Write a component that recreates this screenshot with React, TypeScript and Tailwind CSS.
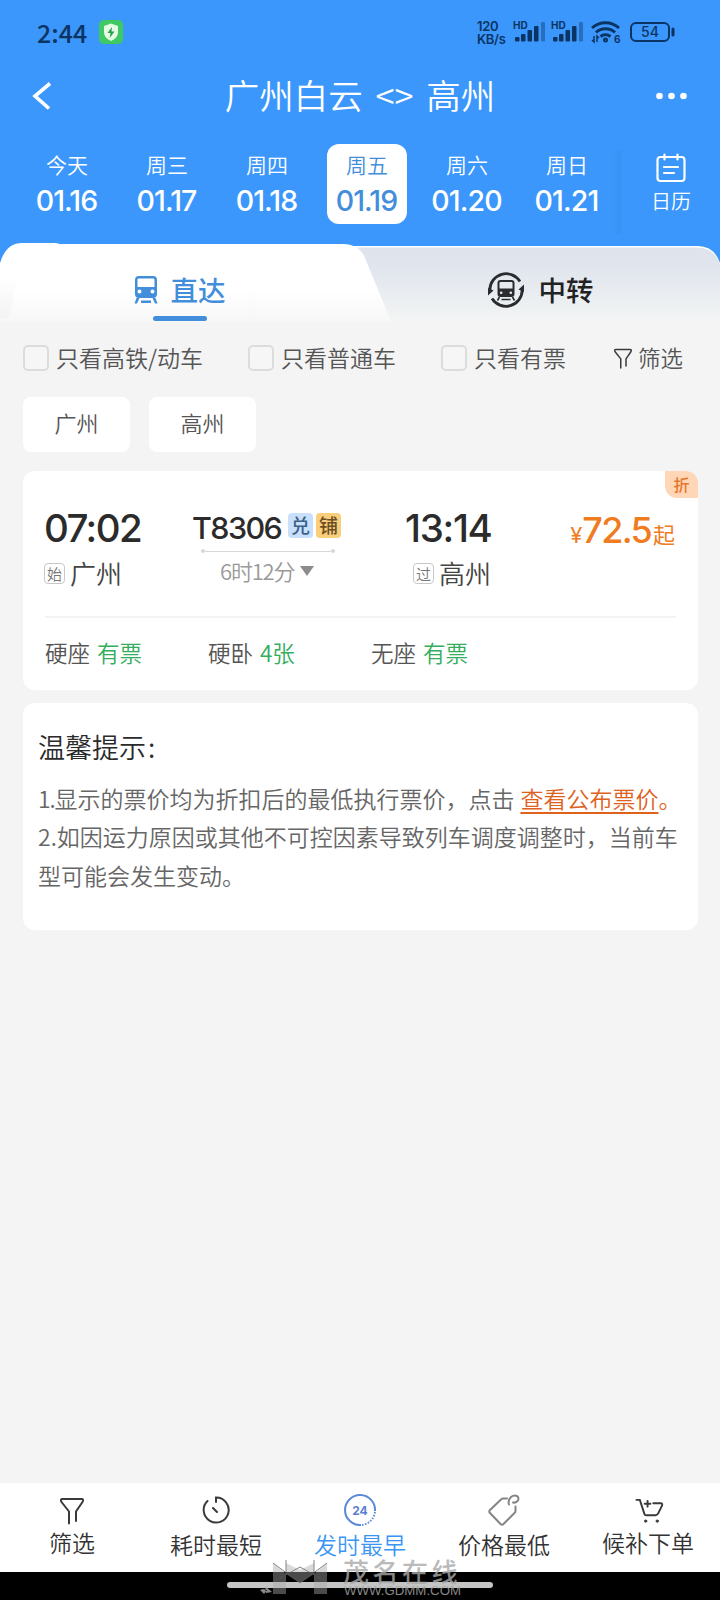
import type { ReactNode } from 'react';

const days = [
  { label: '今天', date: '01.16' },
  { label: '周三', date: '01.17' },
  { label: '周四', date: '01.18' },
  { label: '周五', date: '01.19', active: true },
  { label: '周六', date: '01.20' },
  { label: '周日', date: '01.21' },
];

const seats = [
  { name: '硬座', left: '有票' },
  { name: '硬卧', left: '4张' },
  { name: '无座', left: '有票' },
];

const digits = "font-['Inter','Noto_Sans_CJK_SC',sans-serif]";

const Signal = () => (
  <svg className="overflow-visible" width="32" height="22" viewBox="0 0 32 22" fill="#0b3463">
    <text x="0" y="8" fontSize="10" fontWeight="700" fontFamily="Inter, sans-serif">HD</text>
    <rect x="2" y="16" width="4.500" height="4.500" rx="1" />
    <rect x="8" y="13" width="4.500" height="7.500" rx="1" />
    <rect x="14.500" y="9" width="4.500" height="11.500" rx="1" />
    <rect x="21" y="5" width="4.500" height="15.500" rx="1" />
    <rect x="28" y="1" width="4" height="19.500" rx="1" opacity="0.4" />
  </svg>
);

const StatusBar = () => (
  <div className="flex h-16 items-center justify-between pl-[37px] pr-[44px] text-[#0b3463]">
    <div className="flex items-center gap-3">
      <span className="mb-px w-[50px] whitespace-nowrap text-[25px] leading-8 font-medium">2:44</span>
      <svg width="24" height="24" viewBox="0 0 24 24">
        <rect width="24" height="24" rx="5" fill="#3fc964" />
        <path d="M12 3.500 19 6v6c0 4.500-3 7.300-7 9-4-1.700-7-4.500-7-9V6Z" fill="#e4fbe4" />
        <path d="m13 7-4.500 6h3l-.8 5 4.800-6.500h-3Z" fill="#2a9e4c" />
      </svg>
    </div>
    <div className="flex items-center">
      <div className="mt-0.5 w-[36px] font-['Inter',sans-serif] text-[13px] leading-[13px] font-semibold tracking-[-0.3px]">
        <div>120</div>
        <div>KB/s</div>
      </div>
      <div className="flex gap-[6px]">
        <Signal />
        <Signal />
      </div>
      <svg className="ml-2" width="30" height="24" viewBox="0 0 30 24" fill="none" stroke="#0b3463" strokeWidth="3">
        <path d="M1 8a20 20 0 0 1 27 0M5 12.500a14 14 0 0 1 19 0M9.500 16.500a8 8 0 0 1 10 0" />
        <circle cx="14.500" cy="20" r="1.500" strokeWidth="2" />
        <path d="M3 16v6l-2-2M6 22v-6l2 2" strokeWidth="1.500" />
        <text x="23" y="23" fontSize="10" fontWeight="700" fill="#0b3463" stroke="none" fontFamily="Inter, sans-serif">6</text>
      </svg>
      <svg className="ml-[9px]" width="46" height="20" viewBox="0 0 46 20" fill="none" stroke="#0b3463">
        <rect x="1" y="1" width="38" height="18" rx="5" strokeWidth="2" />
        <path d="M43 7v6" strokeWidth="3" strokeLinecap="round" />
        <text x="20" y="15" textAnchor="middle" fontSize="14" fontWeight="500" fill="#0b3463" stroke="none" fontFamily="Inter, sans-serif">54</text>
      </svg>
    </div>
  </div>
);

const TrainIcon = () => (
  <svg width="24" height="28" viewBox="0 0 24 28" fill="#438edb">
    <path fillRule="evenodd" d="M5 0h14q4 0 4 4v14q0 4-4 4H5q-4 0-4-4V4q0-4 4-4Zm-1.500 3.500v7.500h17V3.500q0-1-1-1h-15q-1 0-1 1ZM5.500 13.500a2 2 0 1 0 0 4 2 2 0 0 0 0-4Zm13 0a2 2 0 1 0 0 4 2 2 0 0 0 0-4Z" />
    <path d="M2.500 22h3L3 27.500H.5ZM18.500 22h3l2 5.500H21ZM7 24.500h10V27H7Z" />
  </svg>
);

const TransferIcon = () => (
  <svg width="38" height="38" viewBox="0 0 38 38" fill="none" stroke="#2b2c30">
    <path d="M2.800 19A16.300 16.300 0 0 1 33 10.500M35.200 19A16.300 16.300 0 0 1 5 27.500" strokeWidth="2.800" />
    <path d="M1 17v7.500l5.500-5ZM37 21v-7.500l-5.500 5Z" fill="#2b2c30" stroke="none" />
    <path fillRule="evenodd" d="M13.500 9h11q3 0 3 3v11q0 3-3 3h-11q-3 0-3-3V12q0-3 3-3Zm-1 3v5.500h13V12q0-1-1-1h-11q-1 0-1 1Zm1.700 8.500a1.300 1.300 0 1 0 0 2.600 1.300 1.300 0 0 0 0-2.600Zm9.600 0a1.300 1.300 0 1 0 0 2.600 1.300 1.300 0 0 0 0-2.600Z" fill="#2b2c30" stroke="none" />
    <path d="m12.500 26-2 3.500M25.500 26l2 3.500M14.500 28.500h9" strokeWidth="1.600" />
  </svg>
);

const Tabs = () => (
  <div className="relative h-[79px]">
    {/* tab backgrounds */}
    <svg className="absolute inset-0" width="720" height="79" viewBox="0 0 720 79">
      <defs>
        <linearGradient id="rest" x1="0" y1="0" x2="0" y2="1">
          <stop offset="0" stopColor="#dfe4ec" />
          <stop offset="0.300" stopColor="#e1e6ee" />
          <stop offset="1" stopColor="#f2f4f4" />
        </linearGradient>
        <linearGradient id="current" x1="0" y1="0" x2="0" y2="1">
          <stop offset="0.600" stopColor="#fff" />
          <stop offset="1" stopColor="#f7f7f7" />
        </linearGradient>
        <linearGradient id="fade" x1="0" y1="0" x2="0" y2="1">
          <stop offset="0" stopColor="#f4f4f4" stopOpacity="0" />
          <stop offset="1" stopColor="#f4f4f4" />
        </linearGradient>
      </defs>
      <path d="M340 3h358q16 0 22 17v59H340Z" fill="#fff" />
      <path d="M340 4.500h357q17 0 23 16.500v55H340Z" fill="url(#rest)" />
      <path d="M0 76h720v3H0Z" fill="#f4f4f4" />
      <path d="M0 20Q6 0 22 0h34l4 1h283q16 0 22 14l25 61v3H0Z" fill="url(#current)" />
      <path d="M0 34h18L8 76H0Z" fill="url(#fade)" />
    </svg>
    <div className="relative flex h-full">
      <div className="flex w-[360px] flex-col items-center pt-[27px] pr-px">
        <div className="flex h-10 items-center gap-[13px]">
          <TrainIcon />
          <span className="-mt-[3px] text-[27.5px] leading-10 font-medium text-[#438edb]">直达</span>
        </div>
        <div className="mt-[6px] h-[5px] w-[54px] rounded-full bg-[#438edb]" />
      </div>
      <div className="flex h-[94px] w-[360px] items-center justify-center gap-[14px]">
        <TransferIcon />
        <span className="-mt-[3px] text-[27.5px] leading-10 font-medium text-[#222]">中转</span>
      </div>
    </div>
  </div>
);

const Check = ({ label, className }: { label: string; className?: string }) => (
  <label className={`flex items-center gap-[7px] ${className}`}>
    <span className="h-[26px] w-[26px] rounded-[5px] border-2 border-[#dcdcdc] bg-[#f6f6f6]" />
    <span className="-mt-[2px] whitespace-nowrap">{label}</span>
  </label>
);

const Funnel = ({ w, h }: { w: number; h: number }) => (
  <svg width={w} height={h} viewBox="0 0 24 28" fill="none" stroke="#3a3a3a" strokeWidth="2" strokeLinejoin="round" strokeLinecap="round">
    <path d="M9 26.500V14.500L1.500 5q-1.500-3 1-3h19q2.500 0 1 3L16 14.500V24" />
  </svg>
);

const StationTag = ({ children }: { children: ReactNode }) => (
  <span className="mt-[3px] flex h-[21px] w-[21px] items-center justify-center rounded-[4px] border border-[#c8c8c8] pb-px text-[15px] leading-none text-[#777]">
    {children}
  </span>
);

const TrainCard = () => (
  <div className="relative mr-[22px] ml-[23px] mt-[19px] h-[219px] rounded-xl bg-white px-[22px]">
    <span className="absolute top-0 right-0 flex h-[27px] w-[33px] items-center justify-center rounded-tr-xl rounded-bl-xl bg-[#ffd6b6] pb-px text-[16px] font-medium text-[#e5772c]">
      折
    </span>
    <div className="flex h-[147px] border-b-2 border-[#f3f3f3] pt-[36px]">
      <div className="w-[147px]">
        <div className={`${digits} -ml-px text-[38.5px] leading-[42px] font-medium tracking-[-1.6px] text-[#2b2b2b]`}>07:02</div>
        <div className="mt-1 -ml-px flex h-[38px] items-center gap-[5px] text-[26px] text-[#444]">
          <StationTag>始</StationTag>广州
        </div>
      </div>
      <div className="w-[152px]">
        <div className="flex h-[42px] items-center gap-1">
          <span className={`${digits} -mt-px w-[92px] text-[30.5px] leading-[42px] font-medium tracking-[-1.6px] text-[#2b2b2b]`}>T8306</span>
          <span className="mb-[5px] flex h-[25px] w-[25px] items-center justify-center rounded-[4px] bg-[#c8e0fb] pb-0.5 text-[19px] leading-none font-medium text-[#3d608a]">兑</span>
          <span className="mb-[5px] -ml-px flex h-[25px] w-[25px] items-center justify-center rounded-[4px] bg-[#fbce7b] pb-0.5 text-[19px] leading-none font-medium text-[#6a5024]">铺</span>
        </div>
        <div className="ml-[9px] flex w-[134px] items-center">
          <span className="h-1 w-1 rounded-full bg-[#d8d8d8]" />
          <span className="h-px flex-1 bg-[#d8d8d8]" />
          <span className="h-1 w-1 rounded-full bg-[#d8d8d8]" />
        </div>
        <div className="flex h-[36px] items-center gap-[5px] pl-[28px] text-[22px] text-[#999]">
          <span className="-mt-0.5 w-[75px] whitespace-nowrap tracking-[-1.2px]">6时12分</span>
          <svg width="14" height="10" viewBox="0 0 14 10" fill="#8c8c8c"><path d="M0 0h14L7 10Z" /></svg>
        </div>
      </div>
      <div className="ml-[61px] w-[100px]">
        <div className={`${digits} text-[38.5px] leading-[42px] font-medium tracking-[-1.3px] text-[#2b2b2b]`}>13:14</div>
        <div className="mt-1 flex h-[38px] items-center gap-[5px] pl-[8px] text-[26px] whitespace-nowrap text-[#444]">
          <StationTag>过</StationTag>高州
        </div>
      </div>
      <div className={`${digits} flex flex-1 items-baseline justify-end text-[#f07c22]`}>
        <span className="text-[22px] font-normal">¥</span>
        <span className="text-[36px] leading-[46px] font-medium tracking-[-1.7px]">72.5</span>
        <span className="mr-px ml-[2px] text-[22px] font-normal">起</span>
      </div>
    </div>
    <div className="flex h-[70px] items-center text-[22.5px] text-[#555]">
      {seats.map((s) => (
        <div key={s.name} className="w-[163px]">
          {s.name}
          <span className="ml-[7px] text-[#34ad5c]">{s.left}</span>
        </div>
      ))}
    </div>
  </div>
);

const Tips = () => (
  <div className="mr-[22px] ml-[23px] mt-[13px] h-[227px] rounded-xl bg-white pt-[25px] pl-[15px]">
    <div className="text-[27px] leading-[38px] text-[#2b2b2b]">温馨提示<span className="ml-0.5">:</span></div>
    <div className="mt-[13px] text-[23px] leading-[38.4px] whitespace-nowrap text-[#666]">
      <div>
        <span className="tracking-[-1.2px]">1.</span>显示的票价均为折扣后的最低执行票价，点击
        <span className="ml-[6px] text-[#e0611c]"><a className="underline decoration-2 underline-offset-4">查看公布票价</a>。</span>
      </div>
      <div>2.如因运力原因或其他不可控因素导致列车调度调整时，当前车</div>
      <div>型可能会发生变动。</div>
    </div>
  </div>
);

const NavItem = ({ icon, label, className }: { icon: ReactNode; label: string; className: string }) => (
  <div className={`flex w-36 flex-col items-center ${className}`}>
    <div className="flex h-[33px] items-center justify-center">{icon}</div>
    <span className="text-[23px] leading-[30px]">{label}</span>
  </div>
);

const BottomNav = () => (
  <div className="flex h-[89px] bg-white">
    <NavItem className="pt-[11px] text-[#333]" label="筛选" icon={<Funnel w={24} h={28} />} />
    <NavItem
      className="pt-[13px] text-[#333]"
      label="耗时最短"
      icon={
        <svg className="-mt-1.5" width="28" height="28" viewBox="0 0 28 28" fill="none" stroke="#3a3a3a" strokeWidth="2" strokeLinecap="round">
          <path d="M14 6V1.500a12.500 12.500 0 1 1-8.500 3.500M11 12l4 4" />
        </svg>
      }
    />
    <NavItem
      className="pt-[13px] text-[#3b95f5]"
      label="发时最早"
      icon={
        <svg className="-mt-1.5" width="32" height="32" viewBox="0 0 32 32" fill="none" stroke="#5a8ad8" strokeWidth="2">
          <path d="M17 31A15 15 0 1 1 31 17" />
          <path d="M31 18A15 15 0 0 1 17 31" strokeDasharray="1.500 1.500" />
          <text x="16" y="20.500" textAnchor="middle" fontSize="12" fontWeight="700" fill="#5a7fd0" stroke="none" fontFamily="Inter, sans-serif">24</text>
        </svg>
      }
    />
    <NavItem
      className="pt-[13px] text-[#333]"
      label="价格最低"
      icon={
        <svg className="-mt-1.5" width="32" height="32" viewBox="0 0 32 32" fill="none" stroke="#858585" strokeWidth="2" strokeLinejoin="round" strokeLinecap="round">
          <path d="M19 4.500h-4q-1 0-2 1L2 16q-1.500 1.500 0 3l10.500 11q1.500 1.500 3 0L26.500 19q1-1 1-2v-4.500" />
          <path d="M21 10.500q-1.500-4 2-7.500 3-2.500 6-1 3 2.500 0 5.500-1.500 1.500-4 1" />
        </svg>
      }
    />
    <NavItem
      className="pt-[11px] text-[#333]"
      label="候补下单"
      icon={
        <svg className="ml-0.5" width="29" height="27" viewBox="0 0 30 28" fill="none" stroke="#3a3a3a" strokeWidth="2" strokeLinecap="round" strokeLinejoin="round">
          <path d="M1.500 3h3.500l4.500 14q.5 2 2.500 2h9q2 0 3-2L28 9q.7-2.500-1.500-2.500H19M13 4v6M10 7h6" />
          <circle cx="11" cy="25" r="1.200" fill="#3a3a3a" strokeWidth="1" />
          <circle cx="23" cy="25" r="1.200" fill="#3a3a3a" strokeWidth="1" />
        </svg>
      }
    />
  </div>
);

const Watermark = () => (
  <svg className="absolute right-[255px] bottom-[2px] overflow-visible" width="210" height="42" viewBox="0 0 210 42" fill="#a9a9a9" opacity="0.800">
    <path d="M18 7 31 18V38H18ZM72 7 59 18V38H72ZM31 7 45 14 59 7V18L45 27 31 18Z" opacity="0.550" />
    <path d="m18 7 27 20L72 7M18 26 45 11 72 26M31 4v14M59 4v14" stroke="#666" strokeWidth="1" fill="none" />
    <path d="m5 34 4 4 3-4-4-1ZM10 30l7 6-6 1Z" />
    <text x="88" y="26" fontSize="26" fontWeight="500" letterSpacing="3.500" fontFamily="'Noto Sans CJK SC', sans-serif">茂名在线</text>
    <text x="89" y="39" fontSize="12.500" textLength="117" lengthAdjust="spacingAndGlyphs" fontFamily="'Liberation Sans', sans-serif">WWW.GDMM.COM</text>
  </svg>
);

export default function App() {
  return (
    <div className="relative flex h-[1600px] w-[720px] flex-col overflow-hidden bg-[#f4f4f4] font-['Noto_Sans_CJK_SC',sans-serif] font-[350]">
      <div className="-mb-[30px] h-[273px] shrink-0 bg-[#3b97fb]">
        <StatusBar />
        <div className="flex h-[66px] items-center justify-between pr-[33px] pb-[2px] pl-[32px] text-white">
          <svg width="20" height="28" viewBox="0 0 20 28" fill="none" stroke="#fff" strokeWidth="3.600"><path d="M18 1.500 3 14l14 12.500" /></svg>
          <h1 className="mb-[4px] ml-[12px] text-[34.5px] leading-[50px] whitespace-nowrap [word-spacing:5px]">广州白云 &lt;&gt; 高州</h1>
          <svg width="31" height="8" viewBox="0 0 31 8" fill="#fff">
            <circle cx="3.500" cy="4" r="3.300" />
            <circle cx="15.500" cy="4" r="3.300" />
            <circle cx="27.500" cy="4" r="3.300" />
          </svg>
        </div>
        <div className="flex h-[108px] pl-[17px] text-white">
          {days.map((d) => (
            <div key={d.date} className="flex w-[100px] justify-center pt-[14px]">
              <div className={`flex h-20 w-20 flex-col items-center rounded-xl pt-[5px] ${d.active ? 'bg-white text-[#438edb]' : ''}`}>
                <span className="text-[21px] leading-[30px]">{d.label}</span>
                <span className={`${digits} -ml-px text-[28.5px] leading-[43px] font-medium tracking-[-0.9px]`}>{d.date}</span>
              </div>
            </div>
          ))}
          <div className="-ml-1 mt-5 h-[84px] w-2 bg-linear-to-r from-[#3b97fb] to-[#3892f4]" />
          <div className="flex flex-1 flex-col items-center pt-[23px] pl-px">
            <svg width="30" height="30" viewBox="0 0 30 30" fill="none" stroke="#fff" strokeWidth="2.200" strokeLinecap="round">
              <rect x="1.500" y="4" width="27" height="24" rx="3" />
              <path d="M8.500 1.500v5M21.500 1.500v5M8 14h14M8 20h10" />
            </svg>
            <span className="mt-[3px] text-[20px] leading-[30px]">日历</span>
          </div>
        </div>
      </div>
      <Tabs />
      <div className="flex h-[72px] items-center pl-[23px] text-[23px] text-[#555]">
        <Check label="只看高铁/动车" className="w-[225px]" />
        <Check label="只看普通车" className="w-[193px]" />
        <Check label="只看有票" className="w-[173px]" />
        <Funnel w={18} h={21} />
        <span className="-mt-px ml-[6px] text-[22.5px]">筛选</span>
      </div>
      <div className="mt-[3px] flex gap-[19px] pl-[23px] text-[22px] text-[#555]">
        <div className="flex h-[55px] w-[107px] items-center justify-center rounded-lg bg-white pb-1">广州</div>
        <div className="flex h-[55px] w-[107px] items-center justify-center rounded-lg bg-white pb-1">高州</div>
      </div>
      <TrainCard />
      <Tips />
      <div className="flex-1" />
      <BottomNav />
      <div className="flex h-7 justify-center bg-black pt-[10px]">
        <div className="h-[6px] w-[266px] rounded-full bg-[#c4c4c4]" />
      </div>
      <Watermark />
    </div>
  );
}
